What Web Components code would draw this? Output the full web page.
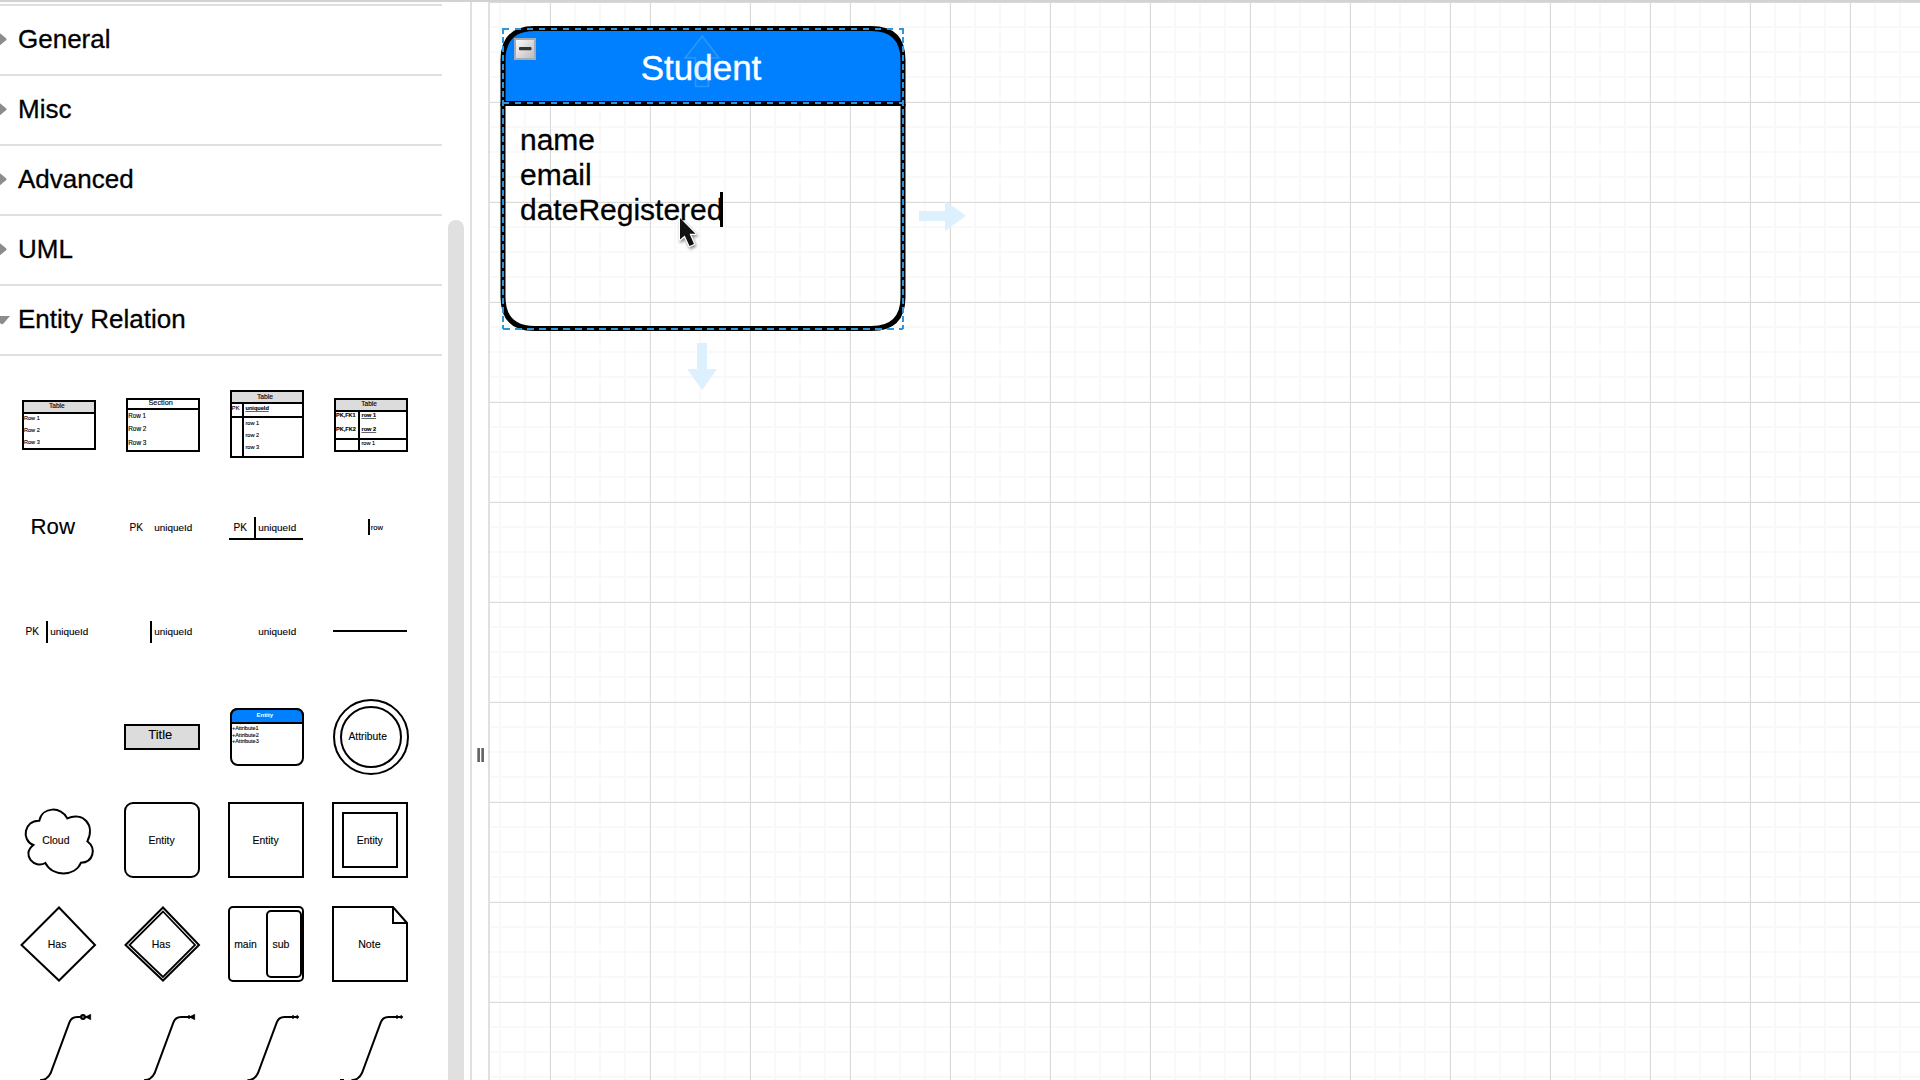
<!DOCTYPE html>
<html lang="en">
<head>
<meta charset="utf-8">
<title>Diagram editor</title>
<style>
html,body{margin:0;height:100%;overflow:hidden;background:#fff}
body{font-family:"Liberation Sans",Helvetica,Arial,sans-serif;color:#000}
</style>
</head>
<body>
<diagram-editor></diagram-editor>
<script>
const define = (name, html) => customElements.define(name, class extends HTMLElement {
  constructor() {
    super();
    this.attachShadow({mode: 'open'}).innerHTML = typeof html === 'function' ? html(this) : html;
  }
});

define('palette-section', el => `
<style>
:host{display:flex;align-items:center;box-sizing:border-box;width:442px;height:70px;border-bottom:2px solid #e0e0e0;font-size:26px;line-height:30px;padding-bottom:2px;-webkit-text-stroke:.3px #000}
svg{display:block;width:18px;height:30px;flex:none}
</style>
<svg viewBox="0 0 18 30"><path fill="#8c8c8c" d="${el.hasAttribute('open') ? 'M-6 12H10L3.5 19.5Q2 21 .5 19.5Z' : 'M-2 7.5L6 14.2Q7 15.2 6 16.2L-2 23Z'}"/></svg>
<slot></slot>`);

const box = (x, y, w, h, extra = '') => `<rect x="${x}" y="${y}" width="${w}" height="${h}" ${extra}/>`;
const line = d => `<path d="${d}"/>`;
const text = (x, y, w, size, s, extra = '') => `<text x="${x}" y="${y}" textLength="${w}" font-size="${size}" lengthAdjust="spacingAndGlyphs" ${extra}>${s}</text>`;
const GREY = 'fill="#dcdcdc"';
const uid = (x, y) => text(x, y, 38, 9.9, 'uniqueId');
const pk = (x, y) => text(x, y, 13.5, 10, 'PK');

// Each drawing uses the sidebar's coordinate space; its tile shows a 104px window of it.
const shapes = [
  // row 1: tables
  box(23,401,72,48) + box(23,401,72,12,GREY) + text(49,408,15.7,6.4,'Table') + [1,2,3].map(i => text(24,408+12*i,15.8,5.6,'Row '+i)).join(''),
  box(127,399,72,52) + line('M127 409H199') + text(148.5,405,24.3,7.2,'Section') + text(128.2,418.3,17.7,6.3,'Row 1') + text(128.2,431.3,18.2,6.3,'Row 2') + text(128.2,445,18.2,6.3,'Row 3'),
  box(231,391,72,66) + box(231,391,72,12,GREY) + line('M231 417H303M243 403V457') + text(257,399.3,16,6.4,'Table') + text(231.8,410.2,7.7,5.6,'PK') + text(245.5,410.2,23.3,5.6,'uniqueId','font-weight="bold" text-decoration="underline"') + [1,2,3].map(i => text(245.5,413+12*i,13.7,5.6,'row '+i)).join(''),
  box(335,399,72,52) + box(335,399,72,12,GREY) + line('M335 439H407M359 411V451') + text(361.3,406,15.5,6.3,'Table') + text(336,417.3,19.5,5.6,'PK,FK1','font-weight="bold"') + text(336,431.3,19.8,5.6,'PK,FK2','font-weight="bold"') + text(361.5,417.3,14.5,5.6,'row 1','font-weight="bold" text-decoration="underline"') + text(361.5,431.3,14.7,5.6,'row 2','font-weight="bold" text-decoration="underline"') + text(361.5,445.3,13.7,5.6,'row 1'),
  // row 2
  text(30.5,534,44.5,22,'Row'),
  pk(129.5,531) + uid(154.3,531),
  pk(233.5,531) + line('M255 517V539M229 539H303') + uid(258.3,531),
  line('M369 519V535') + text(370.8,530.3,12.3,7.6,'row'),
  // row 3
  pk(25.5,635) + line('M47 621V643') + uid(50.3,635),
  line('M151 621V643') + uid(154.3,635),
  uid(258.3,635),
  line('M333 631H407'),
  // row 4
  '',
  box(125,725,74,24,GREY) + text(148.3,739,24,12.6,'Title'),
  box(231,709,72,56,'rx="7"') + '<path d="M231 723V716Q231 709 238 709H296Q303 709 303 716V723Z" fill="#007fff"/>' + text(256.5,717,16.6,6,'Entity','font-weight="bold" style="fill:#fff;stroke:none"') + text(232,730,26.5,5.45,'+Attribute1') + text(232,737,26.7,5.45,'+Attribute2') + text(232,743.2,26.7,5.45,'+Attribute3'),
  '<circle cx="371" cy="737" r="37"/><circle cx="371" cy="737" r="30"/>' + text(348.5,740,38.4,10.2,'Attribute'),
  // row 5
  '<path transform="translate(0 680) scale(.33333)" stroke-width="6" d="M118 422C126 380 184 378 202 415C248 394 287 434 262 484C290 506 280 547 243 548C225 591 158 591 136 549C105 568 62 525 100 495C62 480 73 420 118 422Z"/>' + text(42.2,844,27.3,10.3,'Cloud'),
  box(125,803,74,74,'rx="8"') + text(148.6,844,26,10.3,'Entity'),
  box(229,803,74,74) + text(252.6,844,26,10.3,'Entity'),
  box(333,803,74,74) + box(343,813,54,54) + text(356.8,844,26,10.3,'Entity'),
  // row 6
  line('M59 907.5L95 945L59 980.5L21.5 945Z') + text(47.8,948,18.6,10.3,'Has'),
  line('M163 907.5L199 945L163 980.5L125.5 945Z') + '<path d="M163 911.5L195 945L163 977L129.5 945Z" stroke-width="1.8"/>' + text(151.8,948,18.6,10.3,'Has'),
  box(229,907,74,74,'rx="4"') + box(267,911,34,66,'rx="4"') + text(234.2,948,22.6,10.2,'main') + text(272.4,948,17,10.2,'sub'),
  line('M333 907H393L407 923V981H333Z') + line('M393 907V923H407') + text(358.2,948,22.4,10.2,'Note'),
  // row 7: relation connectors
  ...[
    [2, '<circle cx="249" cy="396" r="6" fill="#777"/><path d="M256 396L272 388V404Z" fill="#000" stroke-width="2"/>'],
    [314, '<path d="M568 396L584 388V404Z" fill="#000" stroke-width="2"/><path d="M567 391V401"/>'],
    [624, '<path d="M873 396l6-5 6 5-6 5zM886 396l6-5 5 5-5 5z" fill="#000" stroke-width="2"/>'],
    [936, '<path d="M1185 396l6-5 6 5-6 5zM1198 396l6-5 5 5-5 5z" fill="#000" stroke-width="2"/><path d="M1020 585h12"/>']
  ].map(([dx, marker]) => `<g transform="translate(0 885) scale(.33333)" stroke-width="6"><path d="M${118+dx} 586Q${140+dx} 586 ${150+dx} 564L${206+dx} 413Q${212+dx} 396 ${230+dx} 396H${266+dx}"/>${marker}</g>`)
];

define('shape-tile', el => {
  const i = +el.getAttribute('index'), x = 6 + (i % 4) * 104, y = 372 + Math.floor(i / 4) * 104;
  return `
<style>
:host{display:block;width:104px;height:104px}
svg{display:block;overflow:hidden;stroke-width:2;fill:none}
rect,path,circle,g{stroke:#000}
text{fill:#000;stroke:#000;stroke-width:.12px;white-space:pre}
</style>
<svg width="104" height="104" viewBox="${x} ${y} 104 104">${shapes[i]}</svg>`;
});

define('shape-palette', `
<style>
:host{display:grid;grid-template-columns:repeat(4,104px);padding:16px 0 0 6px;width:416px}
</style>
${shapes.map((_, i) => `<shape-tile index="${i}"></shape-tile>`).join('')}`);

define('side-bar', `
<style>
:host{display:flex;box-sizing:border-box;width:472px;height:100%;border-right:2px solid #e0e0e0;background:#fff;overflow:hidden}
.list{flex:1;min-width:0;padding-top:2px}
.top{width:442px;height:2px;background:#e0e0e0}
.track{width:22px;padding-top:218px;box-sizing:border-box;height:100%}
.thumb{width:16px;height:880px;border-radius:8px;background:#e0e0e0}
</style>
<div class="list">
<div class="top"></div>
<palette-section>General</palette-section>
<palette-section>Misc</palette-section>
<palette-section>Advanced</palette-section>
<palette-section>UML</palette-section>
<palette-section open>Entity Relation</palette-section>
<shape-palette></shape-palette>
</div>
<div class="track"><div class="thumb"></div></div>`);

define('split-handle', `
<style>
:host{display:flex;align-items:flex-start;box-sizing:border-box;width:18px;height:100%;border-right:2px solid #e0e0e0;background:#fff;padding:746px 0 0 5px}
svg{display:block}
</style>
<svg width="8" height="14"><defs><linearGradient id="g"><stop offset="0" stop-color="#aaa"/><stop offset=".6" stop-color="#555"/><stop offset="1" stop-color="#777"/></linearGradient></defs><rect width="3" height="14" fill="url(#g)"/><rect x="4" width="3" height="14" fill="url(#g)"/></svg>`);

// Collapsible entity box; the rounded outline and its selection are drawn behind the labels.
define('entity-node', `
<style>
:host{display:flex;flex-direction:column;width:400px;height:300px}
.frame{position:absolute;left:-13px;top:-12px;z-index:0}
.title{height:75px;display:flex;align-items:center;justify-content:center;color:#fff;font-size:35px;line-height:40px;box-sizing:border-box;padding:4px 4px 0 0;z-index:1;-webkit-text-stroke:.4px #fff}
.fields{padding:19px 0 0 17px;font-size:30px;line-height:35px;z-index:1;-webkit-text-stroke:.3px #000}
.over{position:absolute;z-index:2;left:-13px;top:-12px;pointer-events:none}
</style>
<svg class="frame" width="430" height="330" viewBox="490 16 430 330" fill="none">
<path d="M503 103.5V60Q503 28.5 534.5 28.5H871.5Q903 28.5 903 60V103.5Z" fill="#007fff" stroke="#000" stroke-width="5"/>
<path d="M503 103.5V297Q503 328.5 534.5 328.5H871.5Q903 328.5 903 297V103.5" stroke="#000" stroke-width="5"/>
<g stroke="#2d97dc" stroke-width="2"><path d="M503 29H903M503 103H903" stroke-dasharray="6 6"/><path d="M503 329H903" stroke-dasharray="7 5"/><path d="M503 28V329M903 28V329" stroke-dasharray="6 3"/></g>
</svg>
<div class="title"><slot name="title"></slot></div>
<div class="fields"><slot></slot></div>
<svg class="over" width="430" height="330" viewBox="490 16 430 330">
<defs><linearGradient id="b" x2="1" y2="1"><stop offset="0" stop-color="#fff"/><stop offset="1" stop-color="#b8b8b8"/></linearGradient></defs>
<rect x="515" y="39" width="20" height="20" fill="url(#b)" stroke="#a3abb8" stroke-width="2"/><rect x="519" y="47" width="12.5" height="3.2" rx="1" fill="#333"/>
<path d="M702.2 36L719 58H708.5V86.5H695.5V58H685Z" fill="#29b6f2" fill-opacity=".12" stroke="#fff" stroke-opacity=".16" stroke-width="1.6"/>
</svg>`);

define('connect-arrow', `
<style>:host{display:block;width:48px;height:30px}svg{display:block}</style>
<svg width="48" height="30"><path d="M0 10H26V0L47 14.8L26 30V20H0Z" fill="#ddf0fd"/></svg>`);

define('mouse-pointer', `
<style>:host{display:block;filter:drop-shadow(1px 2px 1.5px rgba(0,0,0,.45))}svg{display:block}</style>
<svg width="24" height="34" viewBox="-2 -2 24 34"><path d="M1 1V22.5L5.7 18.5L10.5 29L15 27L10.5 16.8H16.5Z" stroke="#fff" stroke-width="2.4" stroke-linejoin="round"/><path d="M1 1V22.5L5.7 18.5L10.5 29L15 27L10.5 16.8H16.5Z" fill="#111"/></svg>`);

define('diagram-canvas', `
<style>
:host{display:block;position:relative;flex:1;height:100%;overflow:hidden;background-color:#fff;
background-image:linear-gradient(90deg,#dadada 1px,transparent 1px),linear-gradient(#dadada 1px,transparent 1px),linear-gradient(90deg,#f9f9f9 2px,transparent 2px),linear-gradient(#f9f9f9 2px,transparent 2px);
background-size:100px 100px,100px 100px,25px 25px,25px 25px;
background-position:60px 0,0 100px,9px 0,0 24px}
entity-node,connect-arrow,mouse-pointer,.caret{position:absolute}
entity-node{left:13px;top:26px}
.right{left:429px;top:199px}
.down{left:188px;top:350px;transform:rotate(90deg)}
mouse-pointer{left:187px;top:213px}
.caret{left:230px;top:190px;width:3px;height:35px;background:#000}
</style>
<entity-node><span slot="title">Student</span>name<br>email<br>dateRegistered</entity-node>
<connect-arrow class="right"></connect-arrow>
<connect-arrow class="down"></connect-arrow>
<div class="caret"></div>
<mouse-pointer></mouse-pointer>`);

define('diagram-editor', `
<style>
:host{display:flex;flex-direction:column;width:100vw;height:100vh;overflow:hidden}
.bar{height:2px;flex:none;background:#d2d2d6}
.main{display:flex;flex:1;min-height:0}
</style>
<div class="bar"></div>
<div class="main"><side-bar></side-bar><split-handle></split-handle><diagram-canvas></diagram-canvas></div>`);
</script>
</body>
</html>
